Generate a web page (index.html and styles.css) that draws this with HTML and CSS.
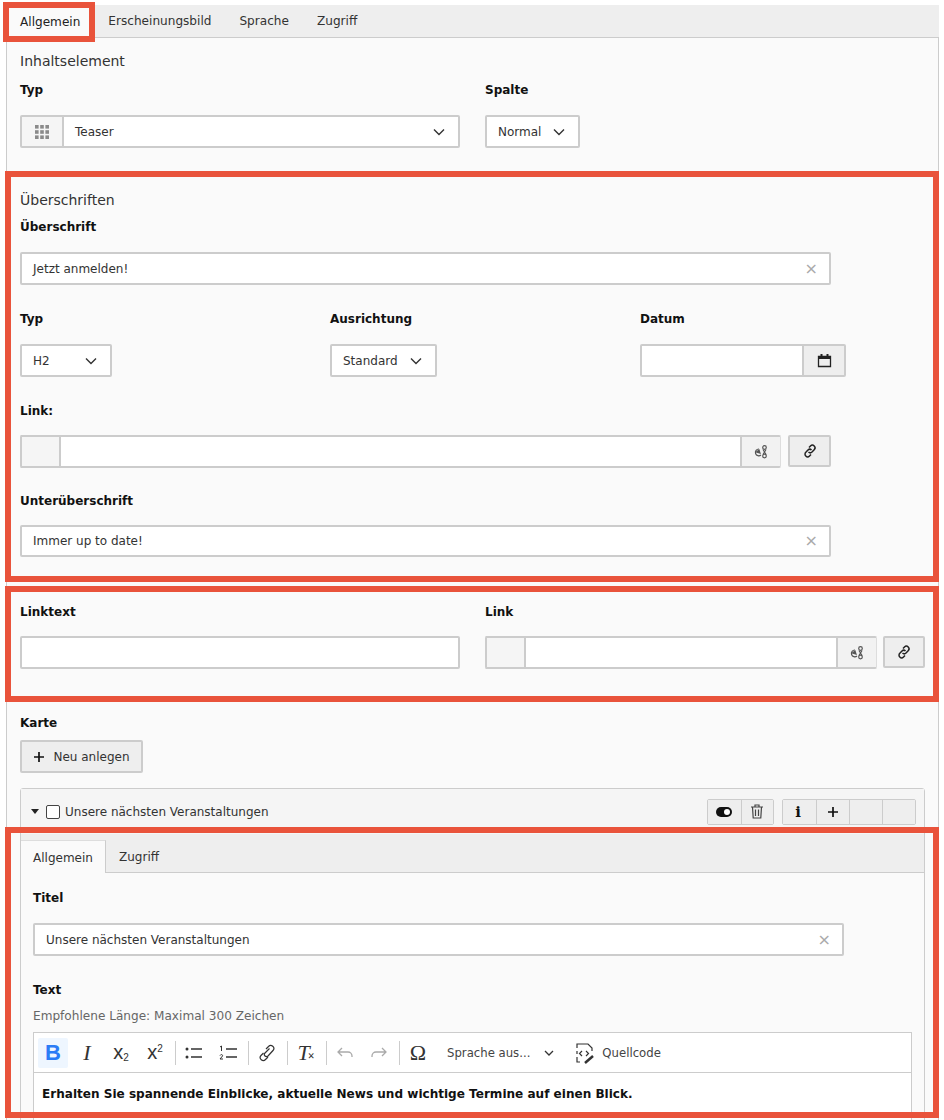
FILE: index.html
```html
<!DOCTYPE html>
<html lang="de">
<head>
<meta charset="utf-8">
<title>Inhaltselement bearbeiten</title>
<link rel="stylesheet" href="styles.css">
</head>
<body>
<div class="page">
  <nav class="tabs">
    <span class="tab active">Allgemein</span>
    <span class="tab">Erscheinungsbild</span>
    <span class="tab">Sprache</span>
    <span class="tab">Zugriff</span>
  </nav>
  <main class="panel">
    <h2 class="legend first">Inhaltselement</h2>
    <div class="row two r-a">
      <div>
        <label class="lbl">Typ</label>
        <div class="control w440">
          <span class="addon"><svg width="16" height="16" viewBox="0 0 16 16" fill="#8a8a8a"><rect x="1" y="1" width="3.600" height="3.600"/><rect x="6.200" y="1" width="3.600" height="3.600"/><rect x="11.400" y="1" width="3.600" height="3.600"/><rect x="1" y="6.200" width="3.600" height="3.600"/><rect x="6.200" y="6.200" width="3.600" height="3.600"/><rect x="11.400" y="6.200" width="3.600" height="3.600"/><rect x="1" y="11.400" width="3.600" height="3.600"/><rect x="6.200" y="11.400" width="3.600" height="3.600"/><rect x="11.400" y="11.400" width="3.600" height="3.600"/></svg></span>
          <span class="value grow">Teaser</span>
          <svg class="chev" width="14" height="14" viewBox="0 0 14 14"><path d="M2 4.500l5 5 5-5" fill="none" stroke="#333" stroke-width="1.400"/></svg>
        </div>
      </div>
      <div>
        <label class="lbl">Spalte</label>
        <div class="control w95">
          <span class="value grow">Normal</span>
          <svg class="chev" width="14" height="14" viewBox="0 0 14 14"><path d="M2 4.500l5 5 5-5" fill="none" stroke="#333" stroke-width="1.400"/></svg>
        </div>
      </div>
    </div>

    <h2 class="legend sec2">Überschriften</h2>
    <div class="r-b">
      <label class="lbl">Überschrift</label>
      <div class="control w811">
        <span class="value grow">Jetzt anmelden!</span>
        <span class="clear">×</span>
      </div>
    </div>
    <div class="row three r-c">
      <div>
        <label class="lbl">Typ</label>
        <div class="control w92"><span class="value grow">H2</span>
          <svg class="chev" width="14" height="14" viewBox="0 0 14 14"><path d="M2 4.500l5 5 5-5" fill="none" stroke="#333" stroke-width="1.400"/></svg></div>
      </div>
      <div>
        <label class="lbl">Ausrichtung</label>
        <div class="control w107"><span class="value grow">Standard</span>
          <svg class="chev" width="14" height="14" viewBox="0 0 14 14"><path d="M2 4.500l5 5 5-5" fill="none" stroke="#333" stroke-width="1.400"/></svg></div>
      </div>
      <div>
        <label class="lbl">Datum</label>
        <div class="control w206"><span class="grow"></span>
          <span class="addon right dark"><svg width="15" height="15" viewBox="0 0 15 15"><path d="M1.500 3.500h12v10h-12z" fill="none" stroke="#222" stroke-width="1.300"/><path d="M1.500 3h12v3h-12z" fill="#222"/><rect x="3.500" y="1" width="2" height="3" fill="#222"/><rect x="9.500" y="1" width="2" height="3" fill="#222"/></svg></span></div>
      </div>
    </div>
    <div class="r-d">
      <label class="lbl snug">Link:</label>
      <div class="linkrow">
        <div class="control w761 link">
          <span class="addon empty"></span>
          <span class="grow"></span>
          <span class="addon right pale"><svg width="16" height="16" viewBox="0 0 16 16" fill="none" stroke="#555" stroke-width="1.200"><path d="M6 5a3.400 3.400 0 1 0 2 6"/><path d="M3.500 8L6 6l1 3z" fill="#555"/><circle cx="11.500" cy="3.500" r="1.800"/><circle cx="11.500" cy="12" r="1.800"/><path d="M10 5.500l3 5M13 5.500l-3 5"/></svg></span>
        </div>
        <span class="btn square"><svg width="16" height="16" viewBox="0 0 16 16" fill="none" stroke="#222" stroke-width="1.500"><path d="M7 4.500l1.500-1.500a2.500 2.500 0 0 1 3.700 3.700L10 9a2.500 2.500 0 0 1-3.500 0"/><path d="M9 11.500L7.500 13A2.500 2.500 0 0 1 3.800 9.300L6 7a2.500 2.500 0 0 1 3.500 0"/></svg></span>
      </div>
    </div>
    <div class="r-e">
      <label class="lbl snug">Unterüberschrift</label>
      <div class="control w811 low">
        <span class="value grow">Immer up to date!</span>
        <span class="clear">×</span>
      </div>
    </div>

    <div class="row two r-f">
      <div>
        <label class="lbl snug">Linktext</label>
        <div class="control w440"></div>
      </div>
      <div>
        <label class="lbl snug">Link</label>
        <div class="linkrow narrow">
          <div class="control w392 link">
            <span class="addon empty"></span>
            <span class="grow"></span>
            <span class="addon right pale"><svg width="16" height="16" viewBox="0 0 16 16" fill="none" stroke="#555" stroke-width="1.200"><path d="M6 5a3.400 3.400 0 1 0 2 6"/><path d="M3.500 8L6 6l1 3z" fill="#555"/><circle cx="11.500" cy="3.500" r="1.800"/><circle cx="11.500" cy="12" r="1.800"/><path d="M10 5.500l3 5M13 5.500l-3 5"/></svg></span>
          </div>
          <span class="btn square"><svg width="16" height="16" viewBox="0 0 16 16" fill="none" stroke="#222" stroke-width="1.500"><path d="M7 4.500l1.500-1.500a2.500 2.500 0 0 1 3.700 3.700L10 9a2.500 2.500 0 0 1-3.500 0"/><path d="M9 11.500L7.500 13A2.500 2.500 0 0 1 3.800 9.300L6 7a2.500 2.500 0 0 1 3.500 0"/></svg></span>
        </div>
      </div>
    </div>

    <div class="r-g">
      <label class="lbl tight">Karte</label>
      <span class="btn new"><svg width="12" height="12" viewBox="0 0 12 12"><path d="M6 1v10M1 6h10" stroke="#111" stroke-width="1.700"/></svg>Neu anlegen</span>
    </div>

    <section class="card">
      <header class="card-head">
        <svg class="caret" width="8" height="5" viewBox="0 0 8 5"><path d="M0 0h8L4 5z" fill="#222"/></svg>
        <span class="check"></span>
        <span class="card-title">Unsere nächsten Veranstaltungen</span>
        <div class="group g1">
          <span class="gbtn"><svg width="16" height="10" viewBox="0 0 16 10"><rect width="16" height="10" rx="5" fill="#111"/><circle cx="11" cy="5" r="3" fill="#fff"/></svg></span>
          <span class="gbtn"><svg width="14" height="15" viewBox="0 0 14 15" fill="none" stroke="#444" stroke-width="1.200"><path d="M1 3h12M5 3V1h4v2M2.500 3l.7 11h7.600l.7-11M5.500 5.500v6.500M8.500 5.500v6.500"/></svg></span>
        </div>
        <div class="group">
          <span class="gbtn glyph">i</span>
          <span class="gbtn"><svg width="12" height="12" viewBox="0 0 12 12"><path d="M6 1v10M1 6h10" stroke="#111" stroke-width="1.700"/></svg></span>
          <span class="gbtn"></span>
          <span class="gbtn"></span>
        </div>
      </header>
      <nav class="subtabs">
        <span class="subtab active">Allgemein</span>
        <span class="subtab">Zugriff</span>
      </nav>
      <div class="card-body">
        <label class="lbl">Titel</label>
        <div class="control w811">
          <span class="value grow">Unsere nächsten Veranstaltungen</span>
          <span class="clear">×</span>
        </div>
        <label class="lbl r-h">Text</label>
        <p class="hint">Empfohlene Länge: Maximal 300 Zeichen</p>
        <div class="editor">
          <div class="toolbar">
            <span class="tb on">B</span>
            <span class="tb ital">I</span>
            <span class="tb math">x<sub>2</sub></span>
            <span class="tb math">x<sup>2</sup></span>
            <i class="sep"></i>
            <span class="tb"><svg width="20" height="14" viewBox="0 0 20 14" stroke="#333"><path d="M7 3h11M7 11h11" stroke-width="1.500"/><circle cx="3" cy="3" r="1.500" fill="#333" stroke="none"/><circle cx="3" cy="11" r="1.500" fill="#333" stroke="none"/></svg></span>
            <span class="tb"><svg width="20" height="16" viewBox="0 0 20 16" stroke="#333"><path d="M8 4h11M8 12h11" stroke-width="1.500"/><path d="M2 2l1.500-1v5M2 10.500c1-1.500 3-1 2.500.5L2 14h3" fill="none" stroke-width="1"/></svg></span>
            <i class="sep"></i>
            <span class="tb"><svg width="18" height="18" viewBox="0 0 18 18" fill="none" stroke="#333" stroke-width="1.200"><path d="M8 5l2.500-2.500a3 3 0 0 1 4.500 4L10 12a2 2 0 0 1-3-3l4.500-4.500"/><path d="M10 13l-2.500 2.500a3 3 0 0 1-4.500-4L5.500 9"/></svg></span>
            <i class="sep"></i>
            <span class="tb clearfmt">T<small>×</small></span>
            <i class="sep"></i>
            <span class="tb"><svg width="20" height="14" viewBox="0 0 20 14" fill="none" stroke="#aaa" stroke-width="1.300"><path d="M7 2L3 6l4 4M3 6h10a4 4 0 0 1 4 4v1"/></svg></span>
            <span class="tb"><svg width="20" height="14" viewBox="0 0 20 14" fill="none" stroke="#aaa" stroke-width="1.300"><path d="M13 2l4 4-4 4M17 6H7a4 4 0 0 0-4 4v1"/></svg></span>
            <i class="sep"></i>
            <span class="tb omega">Ω</span>
            <span class="lang">Sprache aus...</span>
            <svg class="langchev" width="10" height="10" viewBox="0 0 10 10"><path d="M1 3l4 4 4-4" fill="none" stroke="#333" stroke-width="1.300"/></svg>
            <svg class="srcicon" width="22" height="22" viewBox="0 0 22 22" fill="none" stroke="#333" stroke-width="1.200"><path d="M3 6V2h11l4 4v3M3 15v5h3M3 9v3M8 9l-2.500 2.500L8 14M12 9l2.500 2.500L12 14"/><path d="M11 21l8-7" stroke-width="2.500"/></svg>
            <span class="src">Quellcode</span>
          </div>
          <div class="content"><strong>Erhalten Sie spannende Einblicke, aktuelle News und wichtige Termine auf einen Blick.</strong></div>
        </div>
      </div>
    </section>
  </main>
</div>
<div class="frame f-tab"></div>
<div class="frame f-head"></div>
<div class="frame f-link"></div>
<div class="frame f-card"></div>
</body>
</html>
```
FILE: styles.css
```css
* { box-sizing: border-box; }
html, body { margin: 0; padding: 0; background: #fff; }
body { position: relative; width: 944px; height: 1120px; overflow: hidden; font-family: "DejaVu Sans", Verdana, sans-serif; font-size: 12px; color: #333; }
.page { margin-left: 6px; width: 933px; padding-top: 5px; height: 1120px; overflow: hidden; }
.tabs { display: flex; height: 33px; background: #eee; border-bottom: 1px solid #ccc; font-size: 12.1px; }
.tab { display: flex; align-items: center; padding: 0 14px; line-height: 32px; }
.tab.active { background: #fafafa; color: #222; height: 33px; padding: 0 14px; }
.panel { height: 1082px; padding: 0 13px; background: #fafafa; border-left: 1px solid #ccc; border-right: 1px solid #ccc; }
.legend { margin: 0; font-weight: 400; font-size: 14px; line-height: 20px; color: #333; }
.legend.first { padding-top: 13px; height: 33px; }
.legend.sec2 { margin-top: 42px; }
.lbl { display: block; font-weight: 700; font-size: 12px; line-height: 18px; color: #111; margin-bottom: 16px; }
.lbl.snug { margin-bottom: 15px; }
.lbl.tight { margin-bottom: 8px; }
.row { display: grid; }
.row.two { grid-template-columns: 465px 1fr; }
.row.three { grid-template-columns: 310px 310px 1fr; }
.r-a { margin-top: 10px; }
.r-b { margin-top: 8px; }
.r-c { margin-top: 25px; }
.r-d { margin-top: 25px; }
.r-e { margin-top: 24px; }
.r-f { margin-top: 46px; }
.r-g { margin-top: 45px; }
.lbl.r-h { margin: 25px 0 8px; }
.control { display: flex; align-items: center; height: 33px; background: #fff; border: 2px solid #ccc; border-radius: 2px; }
.control.low { height: 32px; }
.w440 { width: 440px; }
.w95 { width: 95px; }
.w92 { width: 92px; }
.w107 { width: 107px; }
.w206 { width: 206px; }
.w811 { width: 811px; }
.w761 { width: 761px; }
.w392 { width: 392px; }
.grow { flex: 1; }
.value { padding-left: 11px; white-space: nowrap; }
.chev { margin-right: 12px; flex: none; }
.clear { color: #aaa; font-size: 16px; margin-right: 11px; line-height: 1; }
.addon { display: flex; align-items: center; justify-content: center; width: 42px; height: 100%; background: #f5f5f5; border-right: 2px solid #ccc; flex: none; }
.addon.empty { width: 39px; }
.addon.right { border-right: 0; border-left: 2px solid #ccc; }
.addon.dark { width: 42px; background: #eee; }
.addon.pale { width: 40px; background: #f2f2f2; border-left: 2px solid #ccc; }
.control.link { border-right: 1px solid #ddd; border-top-color: #ccc; }
.linkrow { display: flex; gap: 7px; height: 33px; }
.linkrow.narrow { gap: 6px; }
.btn { display: inline-flex; align-items: center; justify-content: center; height: 32px; background: #eee; border: 2px solid #ccc; border-radius: 2px; color: #333; }
.btn.square { width: 43px; flex: none; }
.linkrow.narrow .btn.square { width: 42px; }
.btn.new { width: 123px; height: 33px; gap: 8px; }
.card { margin-top: 15px; width: 905px; height: 400px; border: 1px solid #ccc; border-radius: 3px 3px 0 0; background: #fafafa; }
.card-head { display: flex; align-items: center; height: 45px; padding-left: 10px; background: #f5f5f5; }
.caret { flex: none; }
.check { width: 14px; height: 14px; margin-left: 7px; border: 1.5px solid #444; border-radius: 2px; background: #fff; flex: none; }
.card-title { margin-left: 5px; flex: 1; white-space: nowrap; }
.group { display: flex; margin-right: 8px; border: 1px solid #ccc; border-radius: 2px; }
.group.g1 { margin-right: 8px; }
.g1 .gbtn { width: 32.5px; }
.gbtn { display: flex; align-items: center; justify-content: center; width: 33px; height: 24px; background: #eee; border-left: 1px solid #ccc; }
.gbtn:first-child { border-left: 0; }
.gbtn.glyph { font-family: "DejaVu Serif", serif; font-weight: 700; font-size: 15px; color: #111; padding-right: 3px; }
.subtabs { display: flex; height: 39px; padding-top: 6px; background: #eee; border-bottom: 1px solid #ccc; }
.subtab { display: flex; align-items: center; padding: 2px 13px 0; color: #333; }
.subtab.active { width: 85px; height: 33px; padding: 2px 12px 0; background: #fafafa; border-top: 1px solid #ddd; border-right: 1px solid #ccc; }
.card-body { padding: 16px 12px 0; }
.hint { margin: 0 0 7px; line-height: 18px; font-size: 12.1px; color: #666; }
.editor { width: 879px; border: 1px solid #ccc; background: #fff; }
.toolbar { display: flex; align-items: center; height: 40px; padding: 0 2px; border-bottom: 1px solid #ccc; }
.tb { display: flex; align-items: center; justify-content: center; width: 30px; height: 30px; margin: 0 2px; border-radius: 2px; font-size: 18px; color: #333; flex: none; }
.tb.on { background: #eef6ff; color: #2a7cf6; font-weight: 700; font-family: "Liberation Sans", sans-serif; font-size: 22px; }
.tb.ital { font-family: "Liberation Serif", serif; font-style: italic; font-size: 22px; }
.tb.math { display: block; text-align: center; font-family: "Liberation Sans", sans-serif; font-size: 20px; line-height: 28px; }
.tb.math sub { font-size: 10px; line-height: 0; vertical-align: -2px; }
.tb.math sup { font-size: 10px; line-height: 0; vertical-align: 7px; }
.tb.clearfmt { font-family: "Liberation Serif", serif; font-style: italic; font-size: 22px; }
.tb.clearfmt small { font-size: 12px; font-weight: 700; font-style: normal; align-self: flex-end; margin: 0 0 4px -2px; }
.tb.omega { font-family: "Liberation Serif", serif; font-size: 22px; }
.sep { width: 1px; height: 24px; margin: 0 1px 0 3px; background: #ccc; flex: none; }
.lang { margin-left: 12px; color: #444; white-space: nowrap; font-size: 11.7px; }
.langchev { margin-left: 14px; flex: none; }
.srcicon { margin-left: 20px; flex: none; }
.src { margin-left: 6px; color: #444; font-size: 11.7px; }
.content { min-height: 60px; padding: 13px 8px; line-height: 16px; color: #111; font-size: 12.05px; }
.content strong { font-weight: 700; }
.frame { position: absolute; border: 6px solid #e9533b; pointer-events: none; }
.f-tab { left: 3px; top: 2px; width: 92px; height: 40px; }
.f-head { left: 5px; top: 171px; width: 934px; height: 411px; }
.f-link { left: 5px; top: 586px; width: 934px; height: 116px; }
.f-card { left: 5px; top: 827px; width: 934px; height: 291px; }
```
